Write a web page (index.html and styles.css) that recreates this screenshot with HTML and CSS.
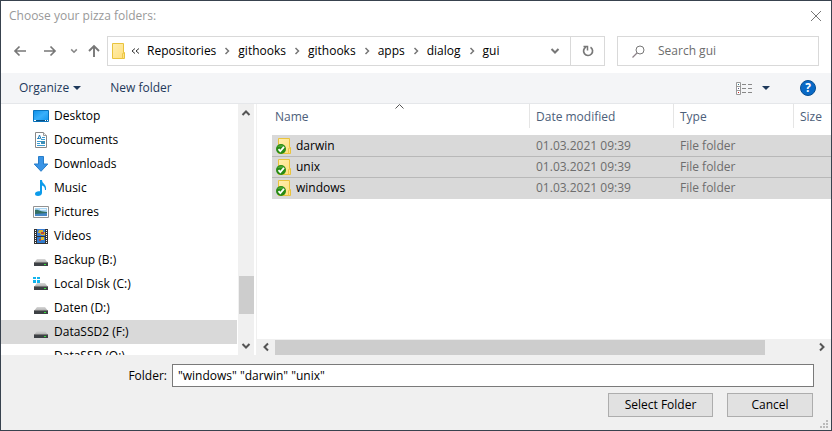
FILE: index.html
```
<!DOCTYPE html>
<html lang="en">
<head>
<meta charset="utf-8">
<title>Choose your pizza folders:</title>
<link rel="stylesheet" href="styles.css">
</head>
<body>
<svg class="symbols" aria-hidden="true">
  <defs>
    <linearGradient id="drive-top" x1="0" y1="0" x2="0" y2="1"><stop offset="0" stop-color="#d8d8d8"/><stop offset="1" stop-color="#a9a9a9"/></linearGradient>
    <linearGradient id="folder-fill" x1="0" y1="0" x2="1" y2="1"><stop offset="0" stop-color="#ffeeb0"/><stop offset="1" stop-color="#ffdf7c"/></linearGradient>
    <linearGradient id="desk-fill" x1="0" y1="0" x2="1" y2="1"><stop offset="0" stop-color="#0c8fe8"/><stop offset=".5" stop-color="#39b0fb"/><stop offset="1" stop-color="#0d92ec"/></linearGradient>
    <symbol id="drive" viewBox="0 0 16 16"><path d="M4 7h8l3 4H1z" fill="url(#drive-top)"/><path d="M1 10.5h14V14H1z" fill="#3d4145"/><path d="M1 10h14v1H1z" fill="#777"/><path d="M11 12h2v1h-2z" fill="#35e23a"/></symbol>
    <symbol id="folder" viewBox="0 0 16 16"><path d="M2.5.5h11v9h1v6h-12z" fill="url(#folder-fill)" stroke="#e9c33d"/><path d="M12.5 15.5v-5h1v-1" fill="none" stroke="#edc84b"/></symbol>
    <symbol id="synced" viewBox="0 0 16 16"><use href="#folder"/><circle cx="5" cy="11" r="5" fill="#288b13"/><path d="M1 9a5 5 0 0 1 8 0" fill="#4aa535"/><path d="M2.5 11.2l1.8 1.9L8 8.8" fill="none" stroke="#fff" stroke-width="1.8"/></symbol>
    <symbol id="crumb" viewBox="0 0 8 8"><path d="M2.5 1L5.5 4l-3 3" fill="none" stroke="#777" stroke-width="1.5"/></symbol>
    <symbol id="chevron" viewBox="0 0 10 10"><path d="M1.5 3L5 6.5 8.5 3" fill="none" stroke="currentColor" stroke-width="2"/></symbol>
    <symbol id="caret" viewBox="0 0 8 4"><path d="M0 0h8L4 4z" fill="#1e395b"/></symbol>
  </defs>
</svg>
<main class="dialog">
  <header class="titlebar">
    <h1>Choose your pizza folders:</h1>
    <button class="close" aria-label="Close"><svg width="10" height="10" viewBox="0 0 10 10"><path d="M0 0l10 10M10 0L0 10" stroke="#777"/></svg></button>
  </header>

  <nav class="navigation" aria-label="Location">
    <div class="history">
      <button aria-label="Back"><svg width="14" height="12" viewBox="0 0 14 12"><path d="M13 6H2M6.500 1.500L2 6l4.500 4.500" fill="none" stroke="#777" stroke-width="1.700"/></svg></button>
      <button aria-label="Forward"><svg width="14" height="12" viewBox="0 0 14 12"><path d="M1 6h11M7.500 1.500L12 6l-4.500 4.500" fill="none" stroke="#777" stroke-width="1.700"/></svg></button>
      <button class="recent" aria-label="Recent locations"><svg width="8" height="8"><use href="#chevron"/></svg></button>
      <button aria-label="Up"><svg width="12" height="14" viewBox="0 0 12 14"><path d="M6 13V2M1 7l5-5 5 5" fill="none" stroke="#777" stroke-width="1.900"/></svg></button>
    </div>
    <div class="address">
      <div class="path">
        <svg class="icon" width="16" height="16"><use href="#folder"/></svg>
        <svg class="more" width="9" height="6" viewBox="0 0 9 6"><path d="M4 .5L1 3l3 2.500M8 .5L5 3l3 2.500" fill="none" stroke="#333"/></svg>
        <a href="#">Repositories</a><svg width="8" height="8"><use href="#crumb"/></svg>
        <a href="#">githooks</a><svg width="8" height="8"><use href="#crumb"/></svg>
        <a href="#">githooks</a><svg width="8" height="8"><use href="#crumb"/></svg>
        <a href="#">apps</a><svg width="8" height="8"><use href="#crumb"/></svg>
        <a href="#">dialog</a><svg width="8" height="8"><use href="#crumb"/></svg>
        <a href="#">gui</a>
      </div>
      <button class="previous" aria-label="Previous locations"><svg width="10" height="10"><use href="#chevron"/></svg></button>
      <button class="refresh" aria-label="Refresh"><svg width="12" height="12" viewBox="0 0 12 12"><path d="M8.500 2.200A4.500 4.500 0 1 1 4 2" fill="none" stroke="#777" stroke-width="1.700"/><path d="M1.500 1.500h4v4" fill="none" stroke="#777" stroke-width="1.500"/></svg></button>
    </div>
    <label class="search">
      <svg width="13" height="13" viewBox="0 0 13 13"><circle cx="8" cy="5" r="4" fill="none" stroke="#777"/><path d="M5 8L.5 12.500" stroke="#8d8289" stroke-width="1.200"/></svg>
      <input type="search" placeholder="Search gui" aria-label="Search gui">
    </label>
  </nav>

  <div class="toolbar">
    <button class="organize">Organize <svg width="8" height="4"><use href="#caret"/></svg></button>
    <button>New folder</button>
    <button class="view" aria-label="Change your view"><svg width="16" height="13" viewBox="0 0 16 13"><path d="M.5.5h4v12h-4zM.5 4.500h4M.5 8.500h4" fill="#fff" stroke="#999"/><path d="M2 2h1v1H2z" fill="#378"/><path d="M2 6h1v1H2z" fill="#558"/><path d="M2 10h1v1H2z" fill="#c22"/><path d="M6 2.500h4M12 2.500h4M6 6.500h4M12 6.500h4M6 10.500h4M12 10.500h4" stroke="#888"/></svg></button>
    <button class="view-menu" aria-label="More view options"><svg width="8" height="4"><use href="#caret"/></svg></button>
    <button class="help" aria-label="Help">?</button>
  </div>

  <section class="browser">
    <div class="tree">
      <ul>
        <li><svg width="16" height="16" viewBox="0 0 16 16"><path d="M.5 2.500h15v11H.5z" fill="url(#desk-fill)" stroke="#0873bd"/><path d="M1 12h14v1H1z" fill="#075083"/><path d="M1 12h2v1H1zM12 12h1v1h-1zM14 12h1v1h-1z" fill="#fff"/></svg>Desktop</li>
        <li><svg width="16" height="16" viewBox="0 0 16 16"><path d="M2.500.5h8l3 3v12h-11z" fill="#fff" stroke="#888"/><path d="M10.500.5v3h3" fill="#eee" stroke="#999"/><path d="M4 6.500h3M9 5.500h3M8 7.500h4M4 9.500h4M4 11.500h3M4 13.500h8" stroke="#399bd2"/><path d="M5 7l1.500-4L8 7" fill="none" stroke="#2179b5"/><path d="M8 9h4v3H8z" fill="#3c8fb8"/></svg>Documents</li>
        <li><svg width="16" height="16" viewBox="0 0 16 16"><path d="M5.500.5h5V8h4.300L8 15.300 1.200 8h4.300z" fill="#3994e6" stroke="#277dc9"/></svg>Downloads</li>
        <li><svg width="16" height="16" viewBox="0 0 16 16"><path d="M7 0h2c0 4 5 4 4 10h-1c0-3-1.500-4-3-4.500V13c0 2-2 3-4 3s-3-1-3-2.300C2 12 4.500 10.700 7 11.300z" fill="#0c9bea"/></svg>Music</li>
        <li><svg width="16" height="16" viewBox="0 0 16 16"><path d="M.5 2.500h15v11H.5z" fill="#fff" stroke="#929292"/><path d="M2 4h12v8H2z" fill="#a8d5f4"/><path d="M2 6c3-1 5 2 12 2v2H2z" fill="#347064"/><path d="M2 10l12-1v3H2z" fill="#4687c6"/><path d="M7 5h6v1H7z" fill="#e8f5fd"/></svg>Pictures</li>
        <li><svg width="16" height="16" viewBox="0 0 16 16"><path d="M1 1h14v15H1z" fill="#343434"/><path d="M4 1h8v7H4z" fill="#3c80d4"/><path d="M4 9h8v6H4z" fill="#327cce"/><path d="M6 2h4v2h2v3H8L7 5H5z" fill="#d9b32e"/><path d="M8 4h3v2H8zM6 11h2v2H6z" fill="#b6473b"/><path d="M8 9h3v3H8z" fill="#e0bc31"/><path d="M2.500 2v14M13.500 2v14" stroke="#fff" stroke-dasharray="1 1"/></svg>Videos</li>
        <li><svg width="16" height="16"><use href="#drive"/></svg>Backup (B:)</li>
        <li><svg width="16" height="16" viewBox="0 0 16 16"><use href="#drive"/><path d="M0 1h3v2H0zM4 1h3v2H4zM0 4h3v3H0zM4 4h3v3H4z" fill="#12b4ed"/></svg>Local Disk (C:)</li>
        <li><svg width="16" height="16"><use href="#drive"/></svg>Daten (D:)</li>
        <li class="current"><svg width="16" height="16"><use href="#drive"/></svg>DataSSD2 (F:)</li>
        <li><svg width="16" height="16"></svg>DataSSD (O:)</li>
      </ul>
      <div class="scroll-y">
        <svg class="up" width="10" height="10"><use href="#chevron"/></svg>
        <span class="thumb"></span>
        <svg width="10" height="10"><use href="#chevron"/></svg>
      </div>
    </div>
    <div class="files">
      <svg class="sorted" width="9" height="5" viewBox="0 0 9 5"><path d="M.5 4.500l4-4 4 4" fill="none" stroke="#555"/></svg>
      <table>
        <colgroup><col class="name"><col class="date"><col class="type"><col></colgroup>
        <thead><tr><th><span>Name</span></th><th><span>Date modified</span></th><th><span>Type</span></th><th><span>Size</span></th></tr></thead>
        <tbody>
          <tr><td><div><svg width="16" height="16"><use href="#synced"/></svg>darwin</div></td><td>01.03.2021 09:39</td><td>File folder</td><td></td></tr>
          <tr><td><div><svg width="16" height="16"><use href="#synced"/></svg>unix</div></td><td>01.03.2021 09:39</td><td>File folder</td><td></td></tr>
          <tr><td><div><svg width="16" height="16"><use href="#synced"/></svg>windows</div></td><td>01.03.2021 09:39</td><td>File folder</td><td></td></tr>
        </tbody>
      </table>
      <div class="scroll-x">
        <svg class="left" width="10" height="10"><use href="#chevron"/></svg>
        <span class="track"><span class="thumb"></span></span>
        <svg class="right" width="10" height="10"><use href="#chevron"/></svg>
      </div>
    </div>
  </section>

  <footer>
    <div class="field">
      <label for="folder-name">Folder:</label>
      <input id="folder-name" type="text" value='"windows" "darwin" "unix"'>
    </div>
    <div class="actions">
      <button class="select">Select Folder</button>
      <button class="cancel">Cancel</button>
    </div>
    <svg class="grip" width="8" height="8" viewBox="0 0 8 8"><path d="M6 0h2v2H6zM3 3h2v2H3zM6 3h2v2H6zM0 6h2v2H0zM3 6h2v2H3zM6 6h2v2H6z" fill="#bbb"/></svg>
  </footer>
</main>
</body>
</html>
```
FILE: styles.css
```
* { box-sizing: border-box; }
body { margin: 0; font: 12px/16px "Open Sans", "Noto Sans", sans-serif; color: #000; }
button, input { font: inherit; color: inherit; }
button { display: flex; align-items: center; justify-content: center; padding: 0; border: 0; background: none; }
svg { display: block; flex: none; }
.symbols { position: absolute; width: 0; height: 0; }

.dialog { display: flex; flex-direction: column; height: 100vh; min-height: 360px; border: 1px solid #38424e; background: #fff; }

.titlebar { display: flex; align-items: center; justify-content: space-between; height: 30px; padding: 0 10px 0 8px; }
.titlebar h1 { margin: 0; font-size: 12px; font-weight: 400; color: #999; }

.navigation { display: flex; padding: 5px 12px 7px 0; }
.history { display: flex; flex: none; align-items: center; width: 106px; padding-left: 12px; gap: 16px; color: #888; }
.history .recent { margin: 0 -6px 0 -3px; }
.address { display: flex; flex: 1; min-width: 0; height: 30px; border: 1px solid #d9d9d9; }
.path { display: flex; flex: 1; align-items: center; min-width: 0; padding-left: 2px; gap: 7px; overflow: hidden; white-space: nowrap; }
.path .icon { margin-right: -2px; }
.path a { color: #000; text-decoration: none; }
.previous { width: 30px; color: #777; }
.refresh { width: 34px; border-left: 1px solid #d9d9d9; }
.search { display: flex; flex: none; align-items: center; width: 202px; height: 30px; margin-left: 12px; padding-left: 14px; gap: 13px; border: 1px solid #d9d9d9; }
.search input { flex: 1; min-width: 0; padding: 0; border: 0; outline: 0; background: none; }
.search input::placeholder { color: #6d6d6d; opacity: 1; }

.toolbar { display: flex; align-items: center; height: 31px; padding: 0 15px 0 18px; border-bottom: 1px solid #e5e7ea; background: #f4f5f7; color: #1e395b; }
.organize { gap: 4px; margin-right: 29px; }
.view { margin-left: auto; }
.view-menu { margin: 0 30px 0 10px; }
.help { width: 16px; height: 16px; border: 1px solid #084e91; border-radius: 50%; background: #0869c6; color: #fff; font-weight: 700; }

.browser { display: flex; flex: 1; min-height: 0; }
.tree { display: flex; flex: none; width: 256px; padding-right: 2px; border-right: 1px solid #f0f0f0; overflow: hidden; }
.tree ul { flex: 1; margin: 0; padding: 0; list-style: none; }
.tree li { display: flex; align-items: center; height: 24px; margin-right: 1px; padding-left: 32px; gap: 5px; }
.tree .current { background: #d9d9d9; }
.scroll-y { display: flex; flex-direction: column; align-items: center; width: 16px; padding: 4px 0; background: #f0f0f0; color: #555; }
.scroll-y .up { transform: rotate(180deg); }
.scroll-y .thumb { width: 15px; height: 38px; margin: auto 0 27px; background: #cdcdcd; }

.files { position: relative; display: flex; flex: 1; flex-direction: column; min-width: 0; overflow: hidden; }
.sorted { position: absolute; top: 0; left: 138px; }
.files table { width: calc(100% - 15px); margin-left: 15px; border-collapse: collapse; table-layout: fixed; }
.name { width: 257px; }
.date { width: 144px; }
.type { width: 120px; }
th { height: 31px; padding: 0; font-weight: 400; text-align: left; vertical-align: top; color: #4c607a; }
th span { display: block; height: 24px; padding: 5px 0 0 6px; border-left: 1px solid #e5e5e5; }
th:first-child span { padding-left: 3px; border-left: 0; }
tbody tr { height: 21px; border-bottom: 1px solid #b8b8b8; background: #d9d9d9; }
tbody tr:last-child { border-bottom-color: #d9d9d9; }
td { padding: 1px 0 0 7px; color: #6d6d6d; white-space: nowrap; }
td:first-child { padding-left: 4px; color: #000; }
td div { display: flex; align-items: center; gap: 4px; }
.scroll-x { display: flex; align-items: center; height: 16px; margin: auto 0 0; padding: 0 4px; background: #f0f0f0; color: #555; }
.scroll-x .track { flex: 1; height: 15px; margin: 0 4px; }
.scroll-x .thumb { display: block; width: 91%; height: 15px; background: #cdcdcd; }
.left { transform: rotate(90deg); }
.right { transform: rotate(-90deg); }

footer { position: relative; padding: 9px 17px 13px; background: #f0f0f0; }
.field { display: flex; align-items: center; }
.field label { width: 154px; padding-right: 5px; text-align: right; }
.field input { flex: 1; min-width: 0; height: 23px; padding: 0 5px; border: 1px solid #7a7a7a; background: #fff; outline: 0; }
.actions { display: flex; justify-content: flex-end; margin-top: 6px; padding-right: 1px; gap: 14px; }
.actions button { height: 24px; border: 1px solid #adadad; background: #e1e1e1; }
.select { width: 105px; }
.cancel { width: 86px; }
.grip { position: absolute; right: 3px; bottom: 2px; }
```
